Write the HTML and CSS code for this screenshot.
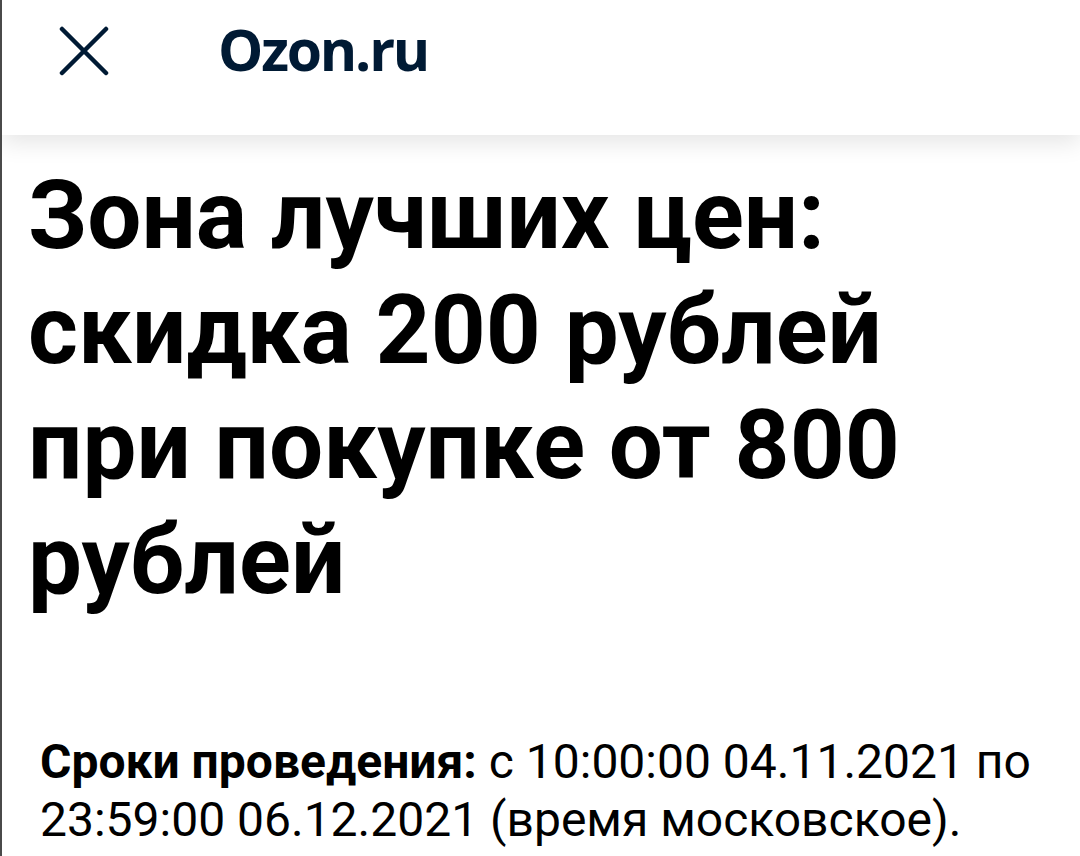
FILE: index.html
```html
<!DOCTYPE html>
<html lang="ru">
<head>
  <meta charset="UTF-8">
  <meta name="viewport" content="width=device-width, initial-scale=1.0">
  <title>Ozon.ru</title>
  <link rel="stylesheet" href="styles.css">
</head>
<body>
  <div class="page">
    <header class="topbar">
      <button class="close-button" aria-label="Закрыть">
        <svg width="50" height="50" viewBox="0 0 50 50">
          <path d="M3 3 L47 47 M47 3 L3 47" stroke="#001a34" stroke-width="4.5" stroke-linecap="round" fill="none"/>
        </svg>
      </button>
      <span class="site-name">Ozon.ru</span>
    </header>

    <main class="content">
      <h1 class="promo-title">Зона лучших цен: скидка 200 рублей при покупке от 800 рублей</h1>
      <p class="promo-terms"><b>Сроки проведения:</b> с 10:00:00 04.11.2021 по 23:59:00 06.12.2021 (время московское).</p>
    </main>
  </div>
</body>
</html>
```

FILE: styles.css
```css
body {
  margin: 0;
  padding: 0;
  background-color: #fff;
  font-family: Roboto, "Liberation Sans", sans-serif;
  color: #000;
}

.page {
  min-height: 856px;
  border-left: 2px solid #4a4a4a;
  overflow: hidden;
}

.topbar {
  height: 135px;
  display: flex;
  align-items: flex-start;
  padding: 26px 0 0 57px;
  box-sizing: border-box;
  background: #fff;
  box-shadow: 0 8px 22px rgba(0, 0, 0, 0.1);
  position: relative;
}

.close-button {
  background: none;
  border: none;
  padding: 0;
  margin: 0;
  width: 50px;
  height: 50px;
  cursor: pointer;
}

.close-button svg {
  display: block;
}

.site-name {
  margin-left: 109px;
  margin-top: -10px;
  font-family: "Open Sans", sans-serif;
  font-weight: 700;
  font-size: 57px;
  line-height: 66px;
  letter-spacing: -2.2px;
  color: #001a34;
}

.content {
  padding: 23px 20px 0 26px;
}

.promo-title {
  margin: 0;
  font-size: 96px;
  line-height: 115px;
  font-weight: 700;
}

.promo-terms {
  margin: 115px 0 0 12px;
  font-size: 48px;
  line-height: 58px;
}

.promo-terms b {
  font-weight: 700;
}
```
